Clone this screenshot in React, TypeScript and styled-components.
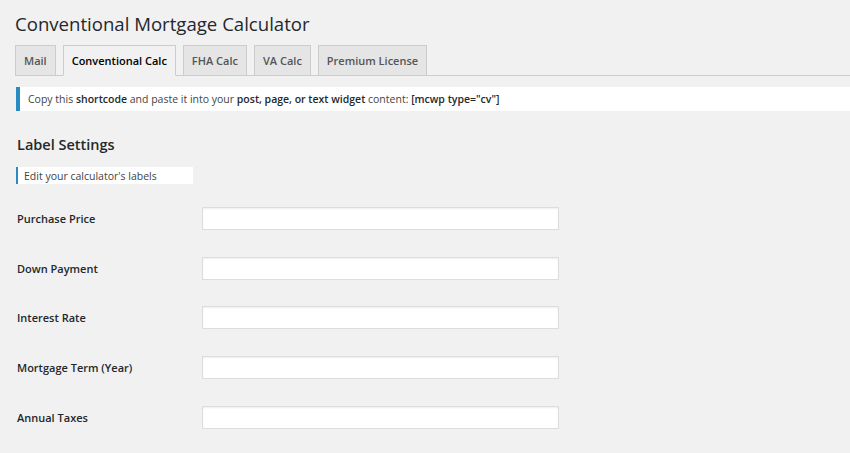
import React from "react";
import styled, { createGlobalStyle } from "styled-components";

const Global = createGlobalStyle`
  html, body { margin: 0; padding: 0; background: #f1f1f1; }
  body { font-family: "Open Sans", "Noto Sans", sans-serif; color: #23282d; }
  * { box-sizing: border-box; }
`;

const Wrap = styled.div`
  padding: 10px 0 0 15px;
  width: 850px;
  height: 453px;
  overflow: hidden;
`;

const Title = styled.h1`
  margin: 0;
  font-size: 18.6px;
  font-weight: 400;
  line-height: 28px;
  color: #23282d;
`;

const TabBar = styled.nav`
  display: flex;
  gap: 7px;
  margin-top: 7px;
  height: 31px;
  border-bottom: 1px solid #ccc;
  align-items: flex-end;
`;

const Tab = styled.div<{ $active?: boolean }>`
  height: 31px;
  margin-bottom: -1px;
  padding: 0 8px;
  display: flex;
  align-items: center;
  font-size: 11px;
  font-weight: 600;
  border: 1px solid #ccc;
  border-bottom-color: ${(p) => (p.$active ? "#f1f1f1" : "#ccc")};
  background: ${(p) => (p.$active ? "#f1f1f1" : "#e5e5e5")};
  color: ${(p) => (p.$active ? "#000" : "#555")};
`;

const Notice = styled.div`
  margin: 11px 0 0 1px;
  height: 24px;
  background: #fff;
  border-left: 4px solid #2a8bc3;
  padding-left: 8px;
  display: flex;
  align-items: center;
  font-size: 10.5px;
  color: #444;
  b { font-weight: 600; color: #23282d; }
`;

const SectionTitle = styled.h2`
  margin: 24px 0 0 2px;
  font-size: 14.5px;
  font-weight: 600;
  line-height: 20px;
`;

const Desc = styled.div`
  margin: 12px 0 0 1px;
  width: 177px;
  height: 17px;
  background: #fff;
  border-left: 2px solid #2a8bc3;
  padding-left: 6px;
  display: flex;
  align-items: center;
  font-size: 10.5px;
  color: #444;
`;

const Form = styled.div`
  margin-top: 10px;
  display: flex;
  flex-direction: column;
`;

const Row = styled.div`
  display: flex;
  align-items: center;
  height: 49.6px;
`;

const Label = styled.label`
  width: 187px;
  padding-left: 2px;
  font-size: 11px;
  font-weight: 600;
  color: #23282d;
`;

const Input = styled.input`
  width: 357px;
  height: 23px;
  border: 1px solid #ddd;
  box-shadow: inset 0 1px 2px rgba(0, 0, 0, 0.07);
  background: #fff;
  margin: 0;
  padding: 2px 6px;
  outline: none;
`;

const labels = ["Purchase Price", "Down Payment", "Interest Rate", "Mortgage Term (Year)", "Annual Taxes"];
const tabs = ["Mail", "Conventional Calc", "FHA Calc", "VA Calc", "Premium License"];

export default function App() {
  return (
    <>
      <Global />
      <Wrap>
        <Title>Conventional Mortgage Calculator</Title>
        <TabBar>
          {tabs.map((t) => (
            <Tab key={t} $active={t === "Conventional Calc"}>{t}</Tab>
          ))}
        </TabBar>
        <Notice>
          <span>
            Copy this <b>shortcode</b> and paste it into your <b>post, page, or text widget</b> content: <b>[mcwp type="cv"]</b>
          </span>
        </Notice>
        <SectionTitle>Label Settings</SectionTitle>
        <Desc>Edit your calculator's labels</Desc>
        <Form>
          {labels.map((l) => (
            <Row key={l}>
              <Label>{l}</Label>
              <Input type="text" />
            </Row>
          ))}
        </Form>
      </Wrap>
    </>
  );
}
